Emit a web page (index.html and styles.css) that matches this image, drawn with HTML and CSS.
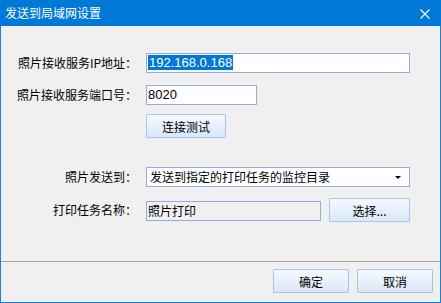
FILE: index.html
```html
<!DOCTYPE html>
<html lang="zh-CN">
<head>
    <meta charset="UTF-8">
    <meta name="viewport" content="width=device-width, initial-scale=1.0">
    <title>发送到局域网设置</title>
    <link rel="stylesheet" href="styles.css">
</head>
<body>
    <div class="dialog">
        <div class="title_bar">
            <span class="title">发送到局域网设置</span>
            <svg class="close" width="10" height="10" viewBox="0 0 10 10">
                <path d="M0.5 0.5 L9.5 9.5 M9.5 0.5 L0.5 9.5" stroke="#fff" stroke-width="1.1" fill="none"/>
            </svg>
        </div>
        <div class="content">
            <div class="row row_ip">
                <label>照片接收服务IP地址：</label>
                <div class="field wide"><span class="selected">192.168.0.168</span></div>
            </div>
            <div class="row row_port">
                <label>照片接收服务端口号：</label>
                <div class="field short">8020</div>
            </div>
            <div class="row row_test">
                <span></span>
                <div><button class="btn btn_test">连接测试</button></div>
            </div>
            <div class="row row_send">
                <label>照片发送到：</label>
                <div class="field wide select">
                    <span>发送到指定的打印任务的监控目录</span>
                    <i class="arrow"></i>
                </div>
            </div>
            <div class="row row_task">
                <label>打印任务名称：</label>
                <div class="task_line">
                    <div class="field readonly">照片打印</div>
                    <button class="btn btn_choose">选择...</button>
                </div>
            </div>
        </div>
        <div class="footer">
            <button class="btn btn_foot">确定</button>
            <button class="btn btn_foot">取消</button>
        </div>
    </div>
</body>
</html>
```

FILE: styles.css
```css
*{
    box-sizing: border-box;
}
body{
    margin: 0;
    font-family: "Noto Sans CJK SC", "Liberation Sans", sans-serif;
    font-size: 12px;
    color: #000;
}
.dialog{
    width: 441px;
    height: 303px;
    border: 1px solid #1a82d9;
    border-top: none;
    background: #f0f0f0;
    display: flex;
    flex-direction: column;
}
.title_bar{
    height: 26px;
    margin: 0 -1px;
    background: #0078d7;
    color: #fff;
    display: flex;
    align-items: center;
    justify-content: space-between;
    padding: 0 11px 0 5px;
}
.title{
    font-size: 12px;
    line-height: 26px;
}
.close{
    display: block;
    margin-top: 1px;
}
.content{
    flex: 1;
    padding: 0 0 0 16px;
}
.row{
    display: grid;
    grid-template-columns: 120px 1fr;
    column-gap: 9px;
    align-items: center;
}
.row label{
    text-align: right;
    white-space: nowrap;
    line-height: 20px;
}
.row_ip{
    margin-top: 27px;
}
.row_port{
    margin-top: 12px;
}
.row_test{
    margin-top: 9px;
}
.row_send{
    margin-top: 29px;
}
.row_task{
    margin-top: 11px;
}
.field{
    height: 20px;
    border: 1px solid #8eaedc;
    background: #fff;
    padding-left: 1px;
    line-height: 18px;
    font-family: "Liberation Sans", "Noto Sans CJK SC", sans-serif;
    font-size: 13px;
    white-space: nowrap;
    overflow: hidden;
}
.wide{
    width: 264px;
}
.short{
    width: 111px;
}
.selected{
    display: inline-block;
    background: #0078d7;
    color: #fff;
    line-height: 15px;
    margin-top: 1px;
    padding: 0 1px;
}
.select{
    display: flex;
    align-items: center;
    justify-content: space-between;
    padding: 0 8px 0 3px;
    font-family: "Noto Sans CJK SC", sans-serif;
    font-size: 12px;
}
.arrow{
    width: 0;
    height: 0;
    border-left: 3px solid transparent;
    border-right: 3px solid transparent;
    border-top: 3px solid #000;
}
.task_line{
    display: flex;
    align-items: center;
    gap: 8px;
}
.readonly{
    width: 175px;
    background: #f0f0f0;
    font-family: "Noto Sans CJK SC", sans-serif;
    font-size: 12px;
    margin-top: 1px;
}
.btn{
    height: 24px;
    border: 1px solid #a8c5ea;
    border-radius: 1px;
    background: linear-gradient(#f5f9fe, #dae7f8);
    font-family: "Noto Sans CJK SC", sans-serif;
    font-size: 12px;
    color: #000;
    padding: 0;
    display: block;
}
.btn_test{
    width: 80px;
}
.btn_choose{
    width: 81px;
}
.footer{
    height: 41px;
    border-top: 1px solid #a0a0a0;
    display: flex;
    justify-content: flex-end;
    gap: 8px;
    padding: 7px 7px 0 0;
}
.btn_foot{
    width: 76px;
}
```
